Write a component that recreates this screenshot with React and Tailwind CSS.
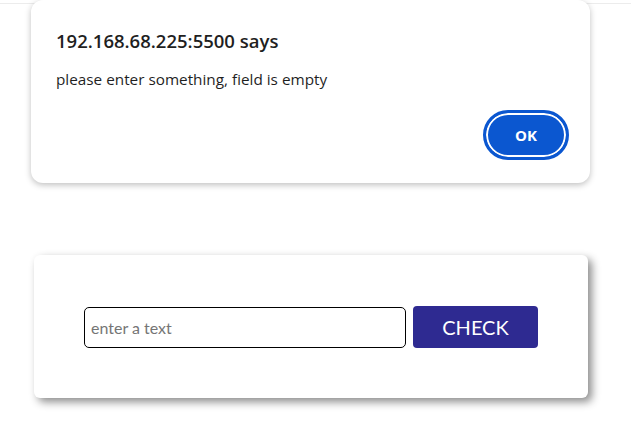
import React, { useState } from "react";

const App = () => {
  const [text, setText] = useState("");

  return (
    <div className="relative w-[631px] h-[421px] bg-white overflow-hidden">
      {/* page top edge */}
      <div className="h-[4px] border-b border-[#ececec]" />

      {/* Form card */}
      <div className="mt-[251px] ml-[34px] w-[554px] h-[143px] bg-white rounded-[6px] shadow-[4px_4px_9px_rgba(0,0,0,0.45)] flex items-center justify-center gap-[7px]">
        <input
          type="text"
          value={text}
          onChange={(e) => setText(e.target.value)}
          placeholder="enter a text"
          className="w-[322px] h-[41px] mt-[2px] border border-black rounded-[5px] px-[6px] text-[16px] text-black placeholder:text-[#757575] outline-none font-['Lato',sans-serif]"
        />
        <button className="w-[125px] h-[42px] bg-[#2e2a91] rounded-[4px] text-white text-[20px] font-['Lato',sans-serif] cursor-pointer">
          CHECK
        </button>
      </div>

      {/* Alert dialog */}
      <div className="absolute left-[31px] top-0 w-[559px] h-[183px] bg-white rounded-[12px] shadow-[0_2px_6px_rgba(0,0,0,0.25)] font-['Open_Sans',sans-serif]">
        <h3 className="absolute left-[25px] top-[32px] text-[18.5px] font-semibold text-[#1f1f1f] leading-none whitespace-nowrap">
          192.168.68.225:5500 says
        </h3>
        <p className="absolute left-[25px] top-[72px] text-[15.3px] text-[#1f1f1f] leading-none whitespace-nowrap">
          please enter something, field is empty
        </p>
        <button className="absolute left-[452px] top-[110px] w-[86px] h-[50px] rounded-full bg-[#0b57d0] border-[3px] border-[#0b57d0] shadow-[inset_0_0_0_2px_white] text-white text-[15px] font-bold cursor-pointer">
          OK
        </button>
      </div>
    </div>
  );
};

export default App;
